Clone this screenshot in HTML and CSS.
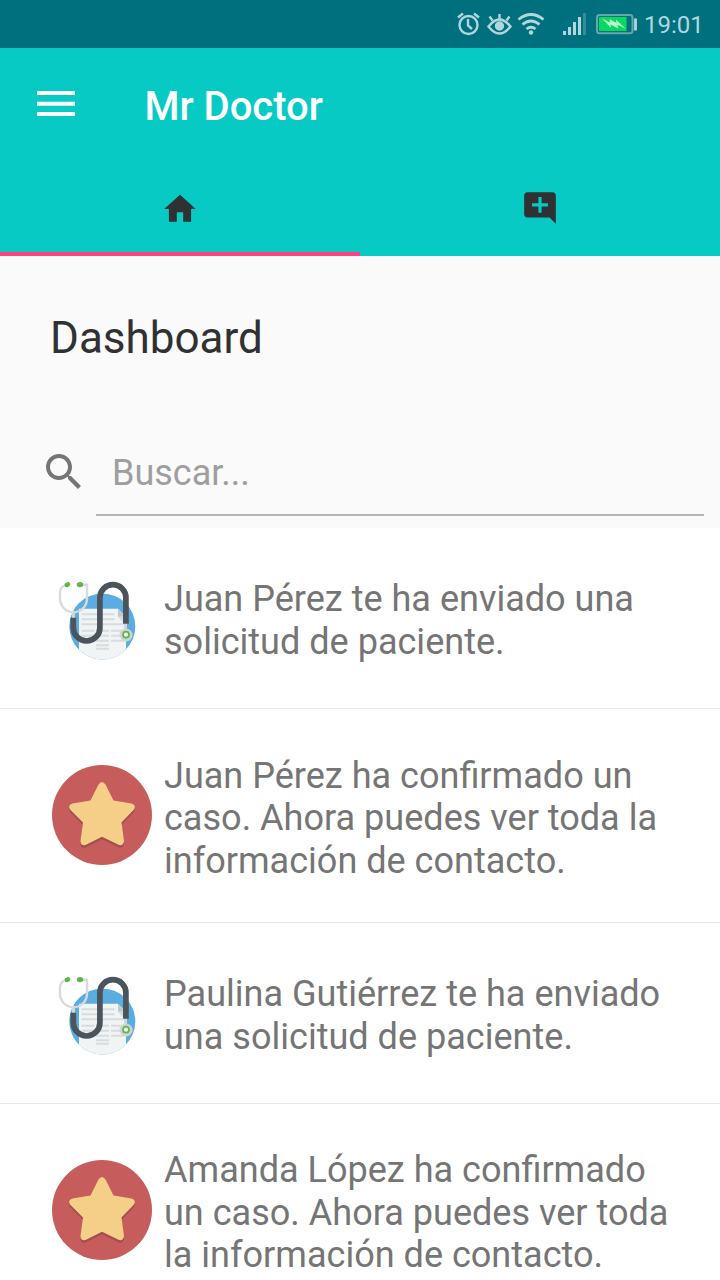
FILE: index.html
```html
<!DOCTYPE html>
<html lang="es">
<head>
<meta charset="utf-8">
<title>Mr Doctor</title>
<link rel="stylesheet" href="styles.css">
</head>
<body>
<svg class="defs" width="0" height="0">
  <symbol id="steth" viewBox="0 -0.7 100 100">
    <clipPath id="disc"><circle cx="50.3" cy="58.7" r="33"/></clipPath>
    <circle cx="50.3" cy="58.7" r="33" fill="#5aade1"/>
    <g clip-path="url(#disc)">
      <path d="M27 41h39l8 8v45H27z" fill="#f1f4f5"/>
      <path d="M66 41v8h8z" fill="#bfc8cd"/>
      <path d="M66 49h8v9z" fill="#d5dadd"/>
      <path d="M29.500 46.500h33M29.500 51.500h33M29.500 56.500h42M29.500 63h13M44 63h13M59 63h13M29.500 68h13M44 68h13M59 68h13M29.500 73h13M44 73h13M59 73h13M44 77.500h13M44 81h13" stroke="#d9dcde" stroke-width="2"/>
    </g>
    <path d="M12 18q-4 2-4 7v6a13.500 13.500 0 0 0 27 0V17h-5" fill="none" stroke="#d8dadb" stroke-width="2.400"/>
    <path d="M21.500 45v7M73.500 55v8" stroke="#d3d6d8" stroke-width="3"/>
    <path d="M21.300 50v10a13.300 13.300 0 0 0 26.600 0V30a13 13 0 0 1 26 0v26" fill="none" stroke="#4b535b" stroke-width="5.700"/>
    <ellipse cx="15.300" cy="17" rx="3" ry="2.300" transform="rotate(-30 15.300 17)" fill="#62b34a"/>
    <ellipse cx="28" cy="16.900" rx="3.200" ry="2.700" fill="#62b34a"/>
    <circle cx="74" cy="67.300" r="6.500" fill="#d0d4d5"/>
    <circle cx="74" cy="67" r="3" fill="#edf5ea" stroke="#62b34a" stroke-width="1.700"/>
  </symbol>
  <symbol id="star" viewBox="0 0 100 100">
    <circle cx="50" cy="50" r="50" fill="#c75c5c"/>
    <path d="M46.500 19.500q3.500-5 7 0L61.500 35.500 79.500 38.500q5 1.500 2.500 6L69.500 57.500 72 76q-.5 5-5 4L50 71.800 33.500 80q-5 1-5-4L31 57.500 18 44.500q-2.500-4.500 2.500-6L38.500 35.500z" transform="translate(0 2.500)" fill="#a34d50"/>
    <path d="M46.500 19.500q3.500-5 7 0L61.500 35.500 79.500 38.500q5 1.500 2.500 6L69.500 57.500 72 76q-.5 5-5 4L50 71.800 33.500 80q-5 1-5-4L31 57.500 18 44.500q-2.500-4.500 2.500-6L38.500 35.500z" fill="#f5cf87"/>
  </symbol>
</svg>
<div class="screen">
  <div class="status">
    <svg class="status-icons" viewBox="450 0 190 48" width="190" height="48" fill="none" stroke="#b0d8dc" stroke-width="2.400">
      <circle cx="468.500" cy="25" r="9"/>
      <path d="M468 19v6.500l4 3.500M458 17.500l5-4M479 17.500l-5-4"/>
      <path d="M488.500 26.500q11-14 22 0-11 14-22 0z"/>
      <circle cx="499.500" cy="26" r="3.500" fill="#b0d8dc"/>
      <path d="M499.500 19v-5M492.500 20.500l-3-4M506.500 20.500l3-4"/>
      <path d="M518.500 19.500q12.500-10 25 0M522.500 24.500q8.500-7 17 0M526.500 29q4.500-3.500 9 0" stroke-width="2.800"/>
      <circle cx="531" cy="32.500" r="2.200" fill="#b0d8dc" stroke="none"/>
      <path d="M564.500 35v-4M569.500 35v-8M574.500 35V22M579.500 35V17" stroke-width="3"/>
      <path d="M584.500 35V13" stroke="#3b8b96" stroke-width="3"/>
      <rect x="597" y="15" width="35.500" height="18.200" rx="2.500" stroke="#6ba5ae" stroke-width="2"/>
      <rect x="599" y="17" width="27.500" height="14" fill="#05da60" stroke="none"/>
      <path d="M602 18.500l8 4-.5-3.500 7 4-.5-3.500 9.500 9-8-3.500.5 3.500-7.500-4 .5 3.500z" fill="#b9f5ce" stroke="none"/>
      <path d="M635.500 18.500v12" stroke-width="2.800"/>
    </svg>
    <span class="clock">19:01</span>
  </div>
  <header class="header">
    <div class="toolbar">
      <svg class="menu" viewBox="0 0 38 26"><path d="M0 2h38M0 12.700h38M0 23h38" stroke="#fff" stroke-width="4"/></svg>
      <h1 class="app-title">Mr Doctor</h1>
    </div>
    <nav class="tabs">
      <div class="tab active"><svg class="tab-icon home" viewBox="0 0 24 24"><path d="M10 20v-6h4v6h5v-8h3L12 3 2 12h3v8z"/></svg></div>
      <div class="tab"><svg class="tab-icon" viewBox="0 0 24 24"><path d="M21.990 4c0-1.100-.89-2-1.990-2H4c-1.100 0-2 .9-2 2v12c0 1.100.9 2 2 2h14l4 4-.01-18zM17 11h-4v4h-2v-4H7V9h4V5h2v4h4v2z"/></svg></div>
    </nav>
  </header>
  <main>
    <h2 class="heading">Dashboard</h2>
    <div class="search">
      <svg class="search-icon" viewBox="0 0 24 24"><path d="M15.500 14h-.79l-.28-.27C15.410 12.590 16 11.110 16 9.500 16 5.910 13.090 3 9.500 3S3 5.910 3 9.500 5.910 16 9.500 16c1.610 0 3.090-.59 4.230-1.570l.27.28v.79l5 4.990L20.490 19l-4.990-5zm-6 0C7.010 14 5 11.990 5 9.500S7.010 5 9.500 5 14 7.010 14 9.500 11.990 14 9.500 14z"/></svg>
      <div class="field">Buscar...</div>
    </div>
    <ul class="list">
      <li class="item"><svg class="avatar"><use href="#steth"/></svg><p class="text">Juan Pérez te ha enviado una<br>solicitud de paciente.</p></li>
      <li class="item tall"><svg class="avatar"><use href="#star"/></svg><p class="text">Juan Pérez ha confirmado un<br>caso. Ahora puedes ver toda la<br>información de contacto.</p></li>
      <li class="item"><svg class="avatar"><use href="#steth"/></svg><p class="text">Paulina Gutiérrez te ha enviado<br>una solicitud de paciente.</p></li>
      <li class="item tall"><svg class="avatar"><use href="#star"/></svg><p class="text">Amanda López ha confirmado<br>un caso. Ahora puedes ver toda<br>la información de contacto.</p></li>
    </ul>
  </main>
</div>
</body>
</html>
```

FILE: styles.css
```css
* { box-sizing: border-box; margin: 0; padding: 0; }
body { font-family: Roboto, sans-serif; background: #fafafa; }
.defs { display: block; }
.screen { width: 720px; height: 1280px; overflow: hidden; }
.status { display: flex; height: 48px; padding-left: 450px; background: #00707f; }
.status-icons { flex: none; }
.clock { margin-left: 4px; font-size: 24px; line-height: 50px; color: #b0d8dc; }
.header { height: 208px; background: #07cac5; }
.toolbar { display: flex; align-items: center; height: 112px; padding-left: 37px; }
.menu { width: 38px; height: 26px; }
.app-title { margin: 5px 0 0 69.500px; font-size: 40px; font-weight: 500; line-height: 48px; color: #fff; }
.tabs { display: flex; height: 96px; }
.tab { display: flex; flex: 1; justify-content: center; padding-top: 29px; border-bottom: 4px solid transparent; }
.active { border-color: #ff4081; }
.tab-icon { width: 38px; height: 38px; fill: #2f3133; }
.home { margin-top: 1px; }
.heading { height: 160px; padding: 55px 0 0 50px; font-size: 44px; font-weight: 400; line-height: 54px; color: #303133; }
.search { display: flex; height: 112px; padding: 31px 16px 0 40px; }
.search-icon { width: 48px; height: 48px; margin-top: .5px; fill: #757575; }
.field { flex: 1; height: 69px; margin-left: 8px; padding: 3px 16px 0; border-bottom: 2px solid #b4b4b4; font-size: 36px; line-height: 46px; color: #9e9e9e; }
.list { list-style: none; background: #fff; }
.item { display: flex; align-items: center; height: 181px; padding: 0 12px 0 52px; border-bottom: 1px solid #e8e8e8; }
.item:nth-child(n+3) .text { margin-top: 5px; }
.tall { height: 214px; }
.avatar { flex: none; width: 100px; height: 100px; margin-bottom: 2px; }
.text { margin: 6px 0 0 12px; font-size: 36.060px; line-height: 42.600px; white-space: nowrap; color: #757575; }
```
